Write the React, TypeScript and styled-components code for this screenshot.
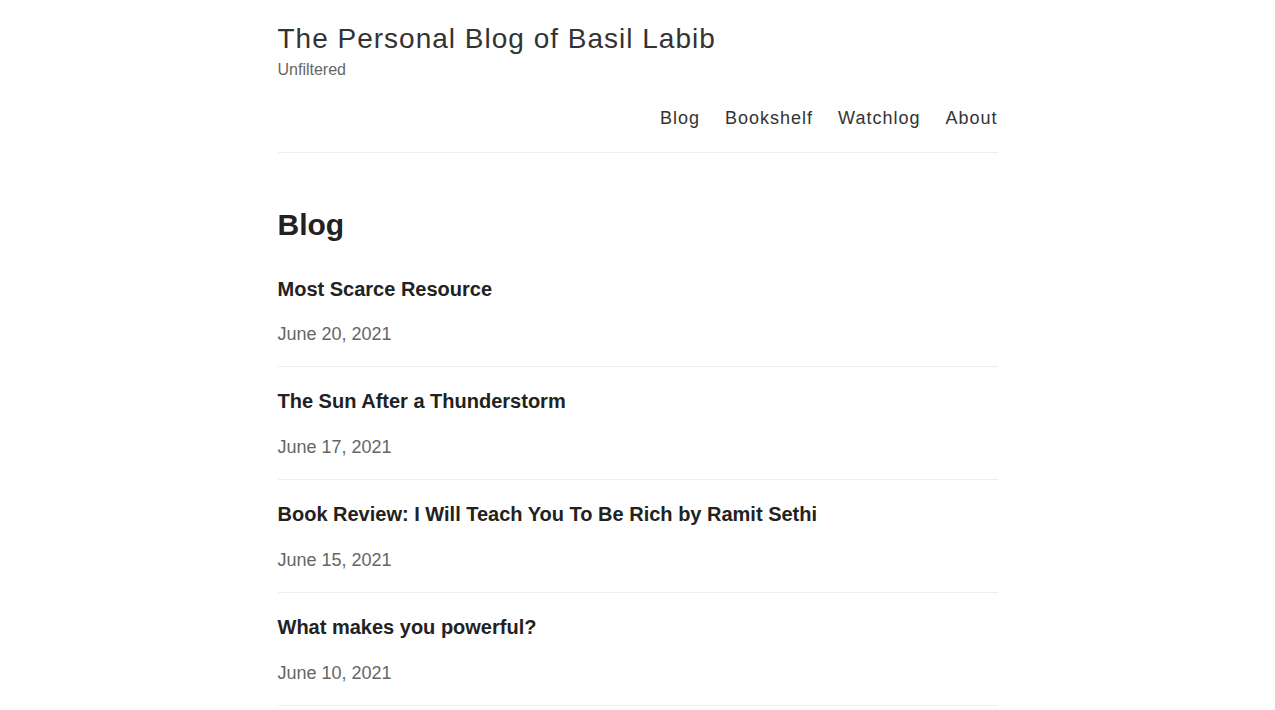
import React from "react";
import styled, { createGlobalStyle } from "styled-components";

const Global = createGlobalStyle`
  html, body { margin: 0; padding: 0; background: #fff; }
  body { font-family: "Liberation Sans", Arial, sans-serif; color: #222; }
`;

const Page = styled.div`
  width: 720px;
  margin: 0 auto;
`;

const Header = styled.header`
  padding-top: 22px;
  border-bottom: 1px solid #eee;
  padding-bottom: 23px;
`;

const SiteTitle = styled.div`
  font-size: 28px;
  letter-spacing: 1px;
  color: #333;
  line-height: 34px;
`;

const Tagline = styled.div`
  font-size: 16px;
  color: #666;
  line-height: 20px;
  margin-top: 4px;
`;

const Nav = styled.nav`
  display: flex;
  justify-content: flex-end;
  gap: 25px;
  margin-top: 27px;
`;

const NavLink = styled.a`
  font-size: 18px;
  letter-spacing: 1px;
  color: #333;
  text-decoration: none;
  line-height: 22px;
`;

const Main = styled.main`
  padding-top: 52px;
`;

const Heading = styled.h1`
  margin: 0 0 32px;
  font-size: 30px;
  font-weight: 700;
  line-height: 40px;
  color: #222;
`;

const Post = styled.article`
  border-bottom: 1px solid #eee;
  padding: 0 0 21px;
  & + & { padding-top: 22px; }
`;

const PostTitle = styled.a`
  display: block;
  font-size: 20px;
  font-weight: 700;
  color: #222;
  text-decoration: none;
  line-height: 24px;
`;

const PostDate = styled.div`
  margin-top: 22px;
  font-size: 18px;
  color: #666;
  line-height: 22px;
  article + article & { margin-top: 23px; }
`;

const posts = [
  { title: "Most Scarce Resource", date: "June 20, 2021" },
  { title: "The Sun After a Thunderstorm", date: "June 17, 2021" },
  { title: "Book Review: I Will Teach You To Be Rich by Ramit Sethi", date: "June 15, 2021" },
  { title: "What makes you powerful?", date: "June 10, 2021" },
];

export default function App() {
  return (
    <>
      <Global />
      <Page>
        <Header>
          <SiteTitle>The Personal Blog of Basil Labib</SiteTitle>
          <Tagline>Unfiltered</Tagline>
          <Nav>
            <NavLink href="#">Blog</NavLink>
            <NavLink href="#">Bookshelf</NavLink>
            <NavLink href="#">Watchlog</NavLink>
            <NavLink href="#">About</NavLink>
          </Nav>
        </Header>
        <Main>
          <Heading>Blog</Heading>
          {posts.map((p) => (
            <Post key={p.title}>
              <PostTitle href="#">{p.title}</PostTitle>
              <PostDate>{p.date}</PostDate>
            </Post>
          ))}
        </Main>
      </Page>
    </>
  );
}
